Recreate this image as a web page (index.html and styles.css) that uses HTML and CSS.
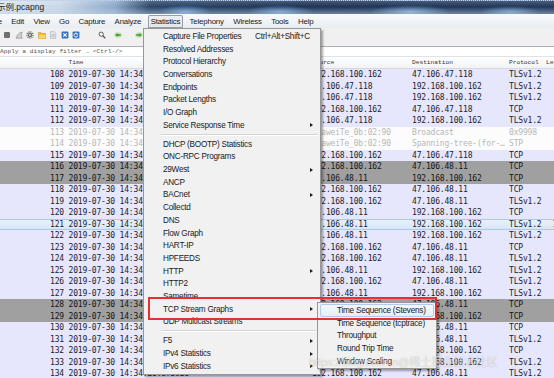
FILE: index.html
```html
<!DOCTYPE html>
<html>
<head>
    <meta charset="utf-8">
    <title>示例.pcapng</title>
    <link rel="stylesheet" href="styles.css">
</head>
<body>
    <div class="titlebar">
        <span class="title">示例.pcapng</span>
    </div>

    <div class="menubar">
        <span class="menu-item">File</span>
        <span class="menu-item">Edit</span>
        <span class="menu-item">View</span>
        <span class="menu-item">Go</span>
        <span class="menu-item">Capture</span>
        <span class="menu-item">Analyze</span>
        <span class="menu-item active">Statistics</span>
        <span class="menu-item">Telephony</span>
        <span class="menu-item">Wireless</span>
        <span class="menu-item">Tools</span>
        <span class="menu-item">Help</span>
    </div>

    <div class="toolbar">
        <svg class="tool" viewBox="0 0 8 8"><rect x="1" y="1" width="6" height="6" rx="1" fill="#707070"/></svg>
        <svg class="tool" viewBox="0 0 8 8"><path d="M1 7.2C1.8 4.2 4 1.6 7.2 1c-1 2-1 4.2 0 6.2z" fill="#cfcfcf" stroke="#8a8a8a" stroke-width=".6"/></svg>
        <svg class="tool" viewBox="0 0 8 8"><circle cx="4" cy="4" r="3.1" fill="none" stroke="#6a6a6a" stroke-width="1.3" stroke-dasharray="1.1 1"/><circle cx="4" cy="4" r="2.2" fill="#6a6a6a"/><circle cx="4" cy="4" r="0.9" fill="#f0f0f0"/></svg>
        <svg class="tool" viewBox="0 0 8 8"><path d="M.4 1.6h2.6l.9 1h3.7v4.9H.4z" fill="#f2bd2c" stroke="#b98412" stroke-width=".5"/><path d="M.4 7.5l1.2-3.6h6.2L6.9 7.5z" fill="#f8d66a"/></svg>
        <svg class="tool" viewBox="0 0 8 8"><path d="M1.5.6h3.6l1.6 1.6v5.2H1.5z" fill="#e6e9ee" stroke="#9aa3ad" stroke-width=".5"/><path d="M2.6 3.4h3M2.6 4.6h3M2.6 5.8h3" stroke="#9aa3ad" stroke-width=".5"/></svg>
        <svg class="tool" viewBox="0 0 8 8"><rect x=".6" y=".6" width="6.8" height="6.8" rx="1" fill="#2f6fc0"/><path d="M2.3 2.3l3.4 3.4M5.7 2.3L2.3 5.7" stroke="#fff" stroke-width="1.1"/></svg>
        <svg class="tool" viewBox="0 0 8 8"><rect x=".6" y=".6" width="6.8" height="6.8" rx="1" fill="#2f6fc0"/><path d="M5.6 3.2A1.9 1.9 0 1 0 5.8 4.6" fill="none" stroke="#fff" stroke-width="1"/><path d="M4.6 1.9l1.5 1.5-1.9.3z" fill="#fff"/></svg>
        <svg class="tool find" viewBox="0 0 8 8"><circle cx="3.2" cy="3.2" r="2.1" fill="#fff" stroke="#555" stroke-width="1"/><path d="M4.8 4.8l2.5 2.5" stroke="#555" stroke-width="1.3"/></svg>
        <svg class="tool back" viewBox="0 0 8 8"><ellipse cx="4" cy="4" rx="3.8" ry="2.8" fill="#bfe3a8"/><path d="M1.3 4l2.2-2v1.3h3.2v1.4H3.5V6z" fill="#3c9a32"/></svg>
        <svg class="tool forward" viewBox="0 0 8 8"><ellipse cx="4" cy="4" rx="3.8" ry="2.8" fill="#bfe3a8"/><path d="M6.7 4L4.5 2v1.3H1.3v1.4h3.2V6z" fill="#3c9a32"/></svg>
    </div>

    <div class="filterbar">
        <div class="filter-input">Apply a display filter … &lt;Ctrl-/&gt;</div>
    </div>

    <div class="packet-list">
        <div class="cols list-header">
            <span></span><span class="pad">Time</span><span>Source</span><span>Destination</span><span>Protocol</span><span class="len-head">Length</span>
        </div>
        <div class="cols row tcp"><span class="no">108</span><span class="pad">2019-07-30 14:34:20.702314</span><span>192.168.100.162</span><span>47.106.47.118</span><span>TLSv1.2</span><span class="len">91</span></div>
        <div class="cols row tcp"><span class="no">109</span><span class="pad">2019-07-30 14:34:20.731552</span><span>47.106.47.118</span><span>192.168.100.162</span><span>TLSv1.2</span><span class="len">113</span></div>
        <div class="cols row tcp"><span class="no">110</span><span class="pad">2019-07-30 14:34:20.731809</span><span>47.106.47.118</span><span>192.168.100.162</span><span>TLSv1.2</span><span class="len">93</span></div>
        <div class="cols row tcp"><span class="no">111</span><span class="pad">2019-07-30 14:34:20.731870</span><span>192.168.100.162</span><span>47.106.47.118</span><span>TCP</span><span class="len">54</span></div>
        <div class="cols row tcp"><span class="no">112</span><span class="pad">2019-07-30 14:34:20.735092</span><span>47.106.47.118</span><span>192.168.100.162</span><span>TLSv1.2</span><span class="len">85</span></div>
        <div class="cols row bcast"><span class="no">113</span><span class="pad">2019-07-30 14:34:20.760218</span><span>HuaweiTe_0b:02:90</span><span>Broadcast</span><span>0x9998</span><span class="len">60</span></div>
        <div class="cols row bcast"><span class="no">114</span><span class="pad">2019-07-30 14:34:20.764711</span><span>HuaweiTe_0b:02:90</span><span>Spanning-tree-(for-…</span><span>STP</span><span class="len">119</span></div>
        <div class="cols row tcp"><span class="no">115</span><span class="pad">2019-07-30 14:34:20.775104</span><span>192.168.100.162</span><span>47.106.47.118</span><span>TCP</span><span class="len">54</span></div>
        <div class="cols row bad"><span class="no">116</span><span class="pad">2019-07-30 14:34:20.781433</span><span>192.168.100.162</span><span>47.106.48.11</span><span>TCP</span><span class="len">66</span></div>
        <div class="cols row bad"><span class="no">117</span><span class="pad">2019-07-30 14:34:20.803527</span><span>47.106.48.11</span><span>192.168.100.162</span><span>TCP</span><span class="len">66</span></div>
        <div class="cols row tcp"><span class="no">118</span><span class="pad">2019-07-30 14:34:20.803633</span><span>192.168.100.162</span><span>47.106.48.11</span><span>TCP</span><span class="len">54</span></div>
        <div class="cols row tcp"><span class="no">119</span><span class="pad">2019-07-30 14:34:20.804060</span><span>192.168.100.162</span><span>47.106.48.11</span><span>TLSv1.2</span><span class="len">571</span></div>
        <div class="cols row tcp"><span class="no">120</span><span class="pad">2019-07-30 14:34:20.826775</span><span>47.106.48.11</span><span>192.168.100.162</span><span>TCP</span><span class="len">60</span></div>
        <div class="cols row sel"><span class="no">121</span><span class="pad">2019-07-30 14:34:20.829341</span><span>47.106.48.11</span><span>192.168.100.162</span><span>TLSv1.2</span><span class="len">1506</span></div>
        <div class="cols row tcp"><span class="no">122</span><span class="pad">2019-07-30 14:34:20.829398</span><span>47.106.48.11</span><span>192.168.100.162</span><span>TLSv1.2</span><span class="len">156</span></div>
        <div class="cols row tcp"><span class="no">123</span><span class="pad">2019-07-30 14:34:20.829445</span><span>192.168.100.162</span><span>47.106.48.11</span><span>TCP</span><span class="len">54</span></div>
        <div class="cols row tcp"><span class="no">124</span><span class="pad">2019-07-30 14:34:20.832906</span><span>192.168.100.162</span><span>47.106.48.11</span><span>TLSv1.2</span><span class="len">180</span></div>
        <div class="cols row tcp"><span class="no">125</span><span class="pad">2019-07-30 14:34:20.855870</span><span>47.106.48.11</span><span>192.168.100.162</span><span>TLSv1.2</span><span class="len">105</span></div>
        <div class="cols row tcp"><span class="no">126</span><span class="pad">2019-07-30 14:34:20.857126</span><span>192.168.100.162</span><span>47.106.48.11</span><span>TLSv1.2</span><span class="len">139</span></div>
        <div class="cols row tcp"><span class="no">127</span><span class="pad">2019-07-30 14:34:20.869384</span><span>47.106.48.11</span><span>192.168.100.162</span><span>TLSv1.2</span><span class="len">123</span></div>
        <div class="cols row bad"><span class="no">128</span><span class="pad">2019-07-30 14:34:20.870015</span><span>192.168.100.162</span><span>47.106.48.11</span><span>TCP</span><span class="len">54</span></div>
        <div class="cols row bad"><span class="no">129</span><span class="pad">2019-07-30 14:34:20.870522</span><span>47.106.48.11</span><span>192.168.100.162</span><span>TCP</span><span class="len">60</span></div>
        <div class="cols row tcp"><span class="no">130</span><span class="pad">2019-07-30 14:34:20.870611</span><span>192.168.100.162</span><span>47.106.48.11</span><span>TCP</span><span class="len">54</span></div>
        <div class="cols row tcp"><span class="no">131</span><span class="pad">2019-07-30 14:34:20.871240</span><span>192.168.100.162</span><span>47.106.48.11</span><span>TLSv1.2</span><span class="len">85</span></div>
        <div class="cols row tcp"><span class="no">132</span><span class="pad">2019-07-30 14:34:20.872790</span><span>47.106.48.11</span><span>192.168.100.162</span><span>TCP</span><span class="len">60</span></div>
        <div class="cols row tcp"><span class="no">133</span><span class="pad">2019-07-30 14:34:20.873415</span><span>47.106.48.11</span><span>192.168.100.162</span><span>TLSv1.2</span><span class="len">97</span></div>
        <div class="cols row tcp"><span class="no">134</span><span class="pad">2019-07-30 14:34:20.873928</span><span>192.168.100.162</span><span>47.106.48.11</span><span>TLSv1.2</span><span class="len">85</span></div>
    </div>

    <!-- Statistics dropdown -->
    <div class="menu stats-menu">
        <div class="item"><span>Capture File Properties</span><span class="shortcut">Ctrl+Alt+Shift+C</span></div>
        <div class="item">Resolved Addresses</div>
        <div class="item">Protocol Hierarchy</div>
        <div class="item">Conversations</div>
        <div class="item">Endpoints</div>
        <div class="item">Packet Lengths</div>
        <div class="item">I/O Graph</div>
        <div class="item"><span>Service Response Time</span><span class="arrow"></span></div>
        <div class="sep"></div>
        <div class="item">DHCP (BOOTP) Statistics</div>
        <div class="item">ONC-RPC Programs</div>
        <div class="item"><span>29West</span><span class="arrow"></span></div>
        <div class="item">ANCP</div>
        <div class="item"><span>BACnet</span><span class="arrow"></span></div>
        <div class="item">Collectd</div>
        <div class="item">DNS</div>
        <div class="item">Flow Graph</div>
        <div class="item">HART-IP</div>
        <div class="item">HPFEEDS</div>
        <div class="item"><span>HTTP</span><span class="arrow"></span></div>
        <div class="item">HTTP2</div>
        <div class="item">Sametime</div>
        <div class="item"><span>TCP Stream Graphs</span><span class="arrow"></span></div>
        <div class="item">UDP Multicast Streams</div>
        <div class="sep"></div>
        <div class="item"><span>F5</span><span class="arrow"></span></div>
        <div class="item"><span>IPv4 Statistics</span><span class="arrow"></span></div>
        <div class="item"><span>IPv6 Statistics</span><span class="arrow"></span></div>
    </div>

    <!-- TCP Stream Graphs submenu -->
    <div class="menu sub-menu">
        <div class="item hover">Time Sequence (Stevens)</div>
        <div class="item">Time Sequence (tcptrace)</div>
        <div class="item">Throughput</div>
        <div class="item">Round Trip Time</div>
        <div class="item">Window Scaling</div>
    </div>

    <div class="callout"></div>
    <div class="watermark">https://blog.csdn.n@稀土掘金技术社区</div>
</body>
</html>
```

FILE: styles.css
```css
body {
    margin: 0;
    width: 554px;
    height: 378px;
    overflow: hidden;
    position: relative;
    background: #f0f0f0;
    font-family: 'Liberation Sans', Arial, sans-serif;
    color: #222;
}

/* window chrome */
.titlebar {
    height: 14px;
    box-sizing: border-box;
    border-top: 1px dotted #c5d3e3;
    background:
        linear-gradient(to bottom, rgba(255, 255, 255, 0.18), rgba(255, 255, 255, 0) 45%, rgba(190, 210, 235, 0.5) 100%),
        radial-gradient(ellipse 26px 7px at 185px 11px, #6f9bcb, rgba(111, 155, 203, 0)),
        radial-gradient(ellipse 34px 7px at 280px 11px, #6a97c8, rgba(106, 151, 200, 0)),
        radial-gradient(ellipse 40px 7px at 410px 11px, #7ca4cf, rgba(124, 164, 207, 0)),
        radial-gradient(ellipse 30px 6px at 510px 11px, #6d94c0, rgba(109, 148, 192, 0)),
        linear-gradient(to right, #dbe4ef 0, #cad8e8 60px, #8ea9c9 115px, #2c4668 150px, #1d3355 300px, #22395c 554px);
    overflow: hidden;
}

.title {
    display: block;
    margin-left: -3px;
    font-family: 'Liberation Sans', 'Noto Sans CJK SC', sans-serif;
    font-size: 8.5px;
    line-height: 12px;
    color: #1b1b1b;
}

.menubar {
    display: flex;
    height: 14px;
    padding-top: 1px;
    box-sizing: border-box;
    background: linear-gradient(#f9fafc, #e9edf2);
    font-size: 7.9px;
    letter-spacing: -0.2px;
    color: #1a1a1a;
}

.menu-item {
    height: 13px;
    line-height: 13px;
    padding: 0 3px;
    margin: 0 1.7px;
    white-space: nowrap;
}

.menu-item:first-child {
    margin-left: -13px;
}

.menu-item.active {
    background: linear-gradient(#eef0f3, #e2e5e9);
    box-shadow: inset 0 0 0 1px #9b9da1;
    border-radius: 2px 2px 0 0;
}

.toolbar {
    display: flex;
    align-items: center;
    height: 14px;
    padding-left: 3px;
    gap: 3.5px;
}

.tool {
    width: 8px;
    height: 8px;
    flex: none;
}

.tool.find { margin-left: 14px; }
.tool.back { margin-left: 5px; }
.tool.forward { margin-left: 9px; }

.filterbar {
    height: 15px;
    padding-top: 4px;
    box-sizing: border-box;
}

.filter-input {
    height: 11px;
    box-sizing: border-box;
    background: #fff;
    border-top: 1px solid #a9b0b8;
    border-bottom: 1px solid #dfe3e8;
    font-family: 'Liberation Mono', monospace;
    font-size: 6.2px;
    line-height: 9px;
    color: #555;
    white-space: nowrap;
}

/* packet list */
.packet-list {
    overflow: hidden;
    font-family: 'DejaVu Sans Mono', monospace;
}

.cols {
    display: grid;
    grid-template-columns: 64px 248px 100px 97px 37px 25px;
    width: max-content;
    white-space: nowrap;
}

.cols > span {
    overflow: hidden;
}

.pad {
    padding-left: 4.6px;
}

.list-header {
    height: 12.25px;
    box-sizing: border-box;
    background: linear-gradient(#ffffff, #f2f3f5);
    border-bottom: 1px solid #d6d8dc;
    font-family: 'Liberation Mono', monospace;
    font-size: 6.2px;
    line-height: 11px;
    color: #333;
    min-width: 560px;
}

.row {
    height: 11.5px;
    line-height: 11.5px;
    font-size: 8px;
    letter-spacing: -0.18px;
    color: #1d1d2a;
    min-width: 570px;
}

.no { text-align: right; }
.len { text-align: right; }

.tcp { background: #e6e6fc; }

.bcast {
    background: #fcfcfc;
    color: #b8b8b8;
}

.bad {
    background: #a0a0a0;
    color: #141414;
}

.sel {
    background: linear-gradient(#eaf2fc, #d5e5f7);
    box-shadow: inset 0 1px 0 #aac9ec, inset 0 -1px 0 #aac9ec;
}

/* popup menus */
.menu {
    position: absolute;
    box-sizing: border-box;
    background: #f1f1f1;
    border: 1px solid #979797;
    padding: 1px 0;
    box-shadow: 2px 2px 2px rgba(0, 0, 0, 0.35);
    font-size: 8.2px;
    letter-spacing: -0.25px;
    color: #1a1a1a;
}

.stats-menu {
    left: 143px;
    top: 28px;
    width: 178px;
}

.sub-menu {
    left: 317px;
    top: 302px;
    width: 120px;
}

.item {
    display: flex;
    align-items: center;
    height: 12.7px;
    padding: 0 7px 0 19px;
    white-space: nowrap;
}

.shortcut {
    margin-left: auto;
    margin-right: 3px;
}

.arrow {
    margin-left: auto;
    width: 0;
    height: 0;
    border-left: 3px solid #1e1e1e;
    border-top: 2.5px solid transparent;
    border-bottom: 2.5px solid transparent;
}

.sep {
    height: 1px;
    margin: 2.2px 2px 2.2px 17px;
    background: #d5d5d5;
    border-bottom: 1px solid #fff;
}

.sub-menu .item {
    margin: 0 2px;
    padding-left: 17px;
    box-sizing: border-box;
}

.sub-menu .item.hover {
    background: linear-gradient(#f3f8fd, #e4eefa);
    border: 1px solid #aecbef;
    border-radius: 2px;
    padding-left: 16px;
}

/* annotation drawn on the screenshot */
.callout {
    position: absolute;
    left: 148px;
    top: 297px;
    width: 289px;
    height: 23px;
    box-sizing: border-box;
    border: 2px solid #e2312e;
}

.watermark {
    position: absolute;
    left: 309px;
    top: 353px;
    font-family: 'Liberation Sans', 'Noto Sans CJK SC', sans-serif;
    font-size: 11px;
    color: rgba(255, 255, 255, 0.6);
    text-shadow: 0 0 1px rgba(0, 0, 0, 0.25);
    white-space: nowrap;
}
```
